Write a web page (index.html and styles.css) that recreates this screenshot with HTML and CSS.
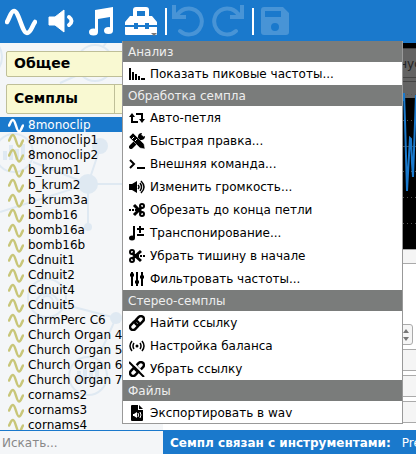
FILE: index.html
```html
<!DOCTYPE html>
<html lang="ru">
<head>
<meta charset="utf-8">
<title>Семплы</title>
<link rel="stylesheet" href="styles.css">
</head>
<body>
<svg class="defs" aria-hidden="true">
  <symbol id="wave" viewBox="0 0 32 32"><path d="M2 17C5 12 6 6 10 6C15 6 17 29 22 29C26 29 27 21 30 17" fill="none" stroke="currentColor" stroke-width="5" stroke-linecap="round"/></symbol>
</svg>

<header class="toolbar">
  <button class="tool" aria-label="Семпл"><svg viewBox="0 0 32 32"><path d="M2 17C5 12 6 6 9 6C14 6 17 28 22 28C26 28 27 21 30 17" fill="none" stroke="currentColor" stroke-width="4.500" stroke-linecap="round"/></svg></button>
  <button class="tool" aria-label="Звук"><svg viewBox="0 0 32 32"><path d="M4 12h6l9-7v22l-9-7H4z" fill="currentColor" stroke="currentColor" stroke-linejoin="round"/><path d="M24 12q5 4 0 8" fill="none" stroke="currentColor" stroke-width="4" stroke-linecap="round"/></svg></button>
  <button class="tool" aria-label="Ноты"><svg viewBox="0 0 32 32"><path d="M10 5L28 2V25H25V12L13 14V27H10Z" fill="currentColor"/><ellipse cx="8.500" cy="27" rx="4.500" ry="3.500" fill="currentColor"/><ellipse cx="23.500" cy="25.500" rx="4.500" ry="3.500" fill="currentColor"/></svg></button>
  <button class="tool" aria-label="Инструменты" aria-expanded="true"><svg viewBox="0 0 32 32"><path d="M8 11V5Q8 2 11 2H21Q24 2 24 5V11H27L32 17V20H24V18H20V20H13V18H9V20H0V17L5 11ZM12 11H20V6H12Z" fill="currentColor" fill-rule="evenodd"/><path d="M0 22H9V24H13V22H20V24H24V22H32V29Q32 30 31 30H1Q0 30 0 29Z" fill="currentColor"/><path d="M26 28h6l-3 3z" fill="#777"/></svg></button>
  <span class="separator"></span>
  <button class="tool" aria-label="Отменить" disabled><svg viewBox="0 0 32 32"><path d="M5 11A13 13 0 1 1 8 26" fill="none" stroke="currentColor" stroke-width="4" stroke-linecap="round"/><path d="M0 0H4V7L7 10H14V14H0Z" fill="currentColor"/></svg></button>
  <button class="tool" aria-label="Вернуть" disabled><svg viewBox="0 0 32 32"><path d="M27 11A13 13 0 1 0 24 26" fill="none" stroke="currentColor" stroke-width="4" stroke-linecap="round"/><path d="M32 0H28V7L25 10H18V14H32Z" fill="currentColor"/></svg></button>
  <span class="separator"></span>
  <button class="tool" aria-label="Сохранить" disabled><svg viewBox="0 0 32 32"><path d="M5 2H24L30 8V27Q30 30 27 30H5Q2 30 2 27V5Q2 2 5 2ZM6 6V12H22V6ZM16 18A4 4 0 1 0 16 26A4 4 0 1 0 16 18Z" fill="currentColor" fill-rule="evenodd"/></svg></button>
</header>

<main class="workspace">
  <aside class="sidebar">
    <svg class="backdrop" viewBox="0 0 163 387" preserveAspectRatio="xMinYMin slice" aria-hidden="true">
      <g fill="none" stroke="currentColor" stroke-width="2">
        <circle cx="-18" cy="14" r="20"/><circle cx="95" cy="20" r="18"/><path d="M103 4L110-6M80 31L60 40"/>
        <circle cx="14" cy="110" r="19"/><path d="M33 119L88 141L0 169M88 141L100 105M88 141H163M88 141V184"/>
        <circle cx="47" cy="255" r="19"/><path d="M66 262L116 275L102 306"/>
        <circle cx="88" cy="333" r="19"/><path d="M36 258a12 12 0 0 1 22 0M41 259a6 6 0 0 1 12 0"/>
        <path d="M5 117V108M11 117V102M17 117V106M23 117V101M79 341V328M85 341V325M91 341V327M97 341V325" stroke-width="4"/>
      </g>
      <g fill="currentColor"><circle cx="100" cy="103" r="8"/><circle cx="88" cy="141" r="10"/><circle cx="88" cy="184" r="4"/><circle cx="116" cy="275" r="6"/></g>
    </svg>
    <h2 class="group">Общее</h2>
    <h2 class="group group-tall"><span>Семплы</span><span class="group-extra"></span></h2>
    <ul class="samples">
      <li class="selected"><svg><use href="#wave"/></svg>8monoclip</li>
      <li><svg><use href="#wave"/></svg>8monoclip1</li>
      <li><svg><use href="#wave"/></svg>8monoclip2</li>
      <li><svg><use href="#wave"/></svg>b_krum1</li>
      <li><svg><use href="#wave"/></svg>b_krum2</li>
      <li><svg><use href="#wave"/></svg>b_krum3a</li>
      <li><svg><use href="#wave"/></svg>bomb16</li>
      <li><svg><use href="#wave"/></svg>bomb16a</li>
      <li><svg><use href="#wave"/></svg>bomb16b</li>
      <li><svg><use href="#wave"/></svg>Cdnuit1</li>
      <li><svg><use href="#wave"/></svg>Cdnuit2</li>
      <li><svg><use href="#wave"/></svg>Cdnuit4</li>
      <li><svg><use href="#wave"/></svg>Cdnuit5</li>
      <li><svg><use href="#wave"/></svg>ChrmPerc C6</li>
      <li><svg><use href="#wave"/></svg>Church Organ 4</li>
      <li><svg><use href="#wave"/></svg>Church Organ 5</li>
      <li><svg><use href="#wave"/></svg>Church Organ 6</li>
      <li><svg><use href="#wave"/></svg>Church Organ 7</li>
      <li><svg><use href="#wave"/></svg>cornams2</li>
      <li><svg><use href="#wave"/></svg>cornams3</li>
      <li><svg><use href="#wave"/></svg>cornams4</li>
    </ul>
  </aside>

  <section class="editor">
    <div class="graph">
      <div class="graph-bar"><button class="graph-button">Синус</button></div>
      <svg class="plot" viewBox="0 0 13 206" preserveAspectRatio="none" aria-hidden="true">
        <path d="M0 51.500H13M0 77.500H13M0 128.500H13M0 154.500H13M0 180.500H13" stroke="#555" stroke-dasharray="1 3"/>
        <path d="M0 103.500H13" stroke="#444"/>
        <path d="M0 58L1 50L2 78L4 148L5 130L7 95L8 96L9 120L10 134L12 80L13 52" fill="none" stroke="#1a79cc" stroke-width="2"/>
      </svg>
    </div>
    <div class="ruler"></div>
    <div class="fields">
      <div class="spin"><svg viewBox="0 0 10 20" aria-hidden="true"><path d="M0 8L3 4L6 8ZM0 12L3 16L6 12Z" fill="#777"/></svg></div>
      <div class="field"></div>
      <div class="field"></div>
      <div class="field"></div>
    </div>
  </section>
</main>

<footer class="bottom">
  <input class="search" type="search" placeholder="Искать..." aria-label="Искать">
  <p class="status"><strong>Семпл связан с инструментами:</strong><span>Preset</span></p>
</footer>

<nav class="menu" aria-label="Инструменты">
  <h3>Анализ</h3>
  <button><svg viewBox="0 0 16 16"><path d="M1 2V14M4 6V14M7 8V14M10 10V14M13 12V14M15 12V14" stroke="currentColor" stroke-width="2"/></svg>Показать пиковые частоты...</button>
  <h3>Обработка семпла</h3>
  <button><svg viewBox="0 0 16 16"><path d="M3 6V12H9M7 4H13V10" fill="none" stroke="currentColor" stroke-width="2"/><path d="M0 7L3 3L6 7ZM10 9H16L13 13Z" fill="currentColor"/></svg>Авто-петля</button>
  <button><svg viewBox="0 0 16 16"><path d="M2 14L12 4" stroke="currentColor" stroke-width="4" stroke-linecap="round"/><path d="M9 4Q9 0 13 0L12 3L13 4L16 3Q16 7 12 7Z" fill="currentColor"/><path d="M0 4L4 0L15 11L16 16L11 15Z" fill="currentColor" stroke="#fff" stroke-width=".5"/><path d="M3 6L5 4M6 8L8 6" stroke="#fff"/></svg>Быстрая правка...</button>
  <button><svg viewBox="0 0 16 16"><path d="M1 4L5 8L1 12M8 12H16" fill="none" stroke="currentColor" stroke-width="2"/></svg>Внешняя команда...</button>
  <button><svg viewBox="0 0 16 16"><path d="M0 5H3L8 2V14L3 11H0Z" fill="currentColor"/><path d="M9 6Q11 8 9 10M11 4Q14 8 11 12M12 2Q18 8 12 14" fill="none" stroke="currentColor" stroke-width="1.500"/></svg>Изменить громкость...</button>
  <button><svg viewBox="0 0 16 16"><path d="M5 3L13 11M5 13L13 5" stroke="currentColor" stroke-width="3"/><path d="M0 8H8" stroke="currentColor" stroke-width="2" stroke-dasharray="2 1"/><g fill="none" stroke="currentColor" stroke-width="2"><circle cx="13" cy="4" r="2"/><circle cx="13" cy="12" r="2"/></g></svg>Обрезать до конца петли</button>
  <button><svg viewBox="0 0 16 16"><path d="M5 1V13M11 1V8M8 4H15M8 10H15" stroke="currentColor" stroke-width="2"/><ellipse cx="3" cy="13" rx="3" ry="2.500" fill="currentColor"/></svg>Транспонирование...</button>
  <button><svg viewBox="0 0 16 16"><path d="M12 3L3 11M12 13L3 5" stroke="currentColor" stroke-width="3"/><path d="M16 8H8" stroke="currentColor" stroke-width="2" stroke-dasharray="2 1"/><g fill="none" stroke="currentColor" stroke-width="2"><circle cx="3" cy="4" r="2"/><circle cx="3" cy="12" r="2"/></g></svg>Убрать тишину в начале</button>
  <button><svg viewBox="0 0 16 16"><path d="M3 1V15M8 1V15M13 1V15" stroke="currentColor" stroke-width="2"/><path d="M1 4H5M6 11H10M11 6H15" stroke="currentColor" stroke-width="3"/></svg>Фильтровать частоты...</button>
  <h3>Стерео-семплы</h3>
  <button><svg viewBox="0 0 16 16"><g fill="none" stroke="currentColor" stroke-width="2.500"><rect x="5.500" y="2.500" width="10" height="6" rx="3" transform="rotate(-45 10.500 5.500)"/><rect x=".5" y="7.500" width="10" height="6" rx="3" transform="rotate(-45 5.500 10.500)"/></g></svg>Найти ссылку</button>
  <button><svg viewBox="0 0 16 16"><circle cx="8" cy="8" r="1.500" fill="currentColor"/><path d="M5 5Q3 8 5 11M11 5Q13 8 11 11M3 3Q-1 8 3 13M13 3Q17 8 13 13" fill="none" stroke="currentColor" stroke-width="1.500"/></svg>Настройка баланса</button>
  <button><svg viewBox="0 0 16 16"><g fill="none" stroke="currentColor" stroke-width="2.500"><rect x="5.500" y="2.500" width="10" height="6" rx="3" transform="rotate(-45 10.500 5.500)"/><rect x=".5" y="7.500" width="10" height="6" rx="3" transform="rotate(-45 5.500 10.500)"/></g><path d="M2 0L16 14" stroke="#fff" stroke-width="2"/><path d="M0 1L15 16" stroke="currentColor" stroke-width="2"/></svg>Убрать ссылку</button>
  <h3>Файлы</h3>
  <button><svg viewBox="0 0 16 16"><path d="M2 1Q2 0 3 0H9V5H14V15Q14 16 13 16H3Q2 16 2 15ZM10 0L14 4H10Z" fill="currentColor"/><path d="M4 9H5L8 7V13L5 11H4Z" fill="#fff"/><path d="M9 8Q10 10 9 12M11 7Q13 10 11 13" fill="none" stroke="#fff"/></svg>Экспортировать в wav</button>
</nav>
</body>
</html>
```
FILE: styles.css
```css
* { box-sizing: border-box; }

body {
  position: relative;
  display: flex;
  flex-direction: column;
  height: 100vh;
  margin: 0;
  overflow: hidden;
  font: 12px/16px "DejaVu Sans", sans-serif;
  color: #000;
  background: #fff;
}

h2, h3, p, ul { margin: 0; padding: 0; }
button { font: inherit; color: inherit; }
.defs { position: absolute; width: 0; height: 0; }

.toolbar {
  display: flex;
  align-items: center;
  flex: none;
  padding: 5px 5px 6px;
  color: #fff;
  background: #1a79cc;
}
.tool {
  width: 32px;
  height: 32px;
  margin-right: 8px;
  padding: 0;
  border: 0;
  background: none;
}
.tool:disabled { color: #4894d6; }
.tool svg { display: block; width: 32px; height: 32px; }
.separator {
  width: 2px;
  height: 27px;
  margin-right: 5px;
  background: #fff;
}

.workspace { display: flex; flex: 1; min-height: 0; }

.sidebar {
  position: relative;
  display: flex;
  flex-direction: column;
  flex: none;
  width: 163px;
  padding-top: 8px;
  background: #f4f6f8;
}
.backdrop {
  position: absolute;
  inset: 0;
  width: 100%;
  height: 100%;
  color: #dfe9f2;
}
.group {
  position: relative;
  display: flex;
  align-items: center;
  justify-content: space-between;
  flex: none;
  height: 26px;
  margin: 0 6px 7px;
  padding: 0 0 2px 7px;
  border: 1px solid #bfbf98;
  border-radius: 2px;
  font-size: 14px;
  background: #f9f9d2;
}
.group-tall { height: 30px; margin-bottom: 3px; }
.group-extra { align-self: stretch; width: 42px; margin-bottom: -2px; border-left: 1px solid #bfbf98; }

.samples {
  position: relative;
  flex: 1;
  min-height: 0;
  overflow: hidden;
  list-style: none;
}
.samples li {
  display: flex;
  align-items: center;
  gap: 4px;
  height: 15px;
  padding: 1px 0 0 8px;
}
.samples svg { width: 16px; height: 16px; color: #c8c678; }
.samples .selected { color: #fff; background: #1a79cc; }
.samples .selected svg { color: #fff; }

.editor { display: flex; flex-direction: column; flex: 1; min-width: 0; }
.graph {
  position: relative;
  flex: none;
  height: 206px;
  padding-top: 5px;
  background: #000;
}
.graph-bar { height: 50px; border-top: 1px solid #444; background: #636363; }
.graph-button {
  display: block;
  width: 100%;
  height: 29px;
  margin-bottom: 3px;
  padding: 2px 0 0 220px;
  border: 0;
  border-bottom: 1px solid #444;
  text-align: left;
  color: #222;
  background: none;
}
.graph-bar::after { content: ""; display: block; border-top: 1px solid #444; }
.plot { position: absolute; right: 0; top: 0; width: 13px; height: 206px; }
.ruler {
  flex: none;
  height: 15px;
  border: solid #aaa;
  border-width: 1px 0;
  background: #f5f5f5;
}
.fields {
  display: flex;
  flex-direction: column;
  gap: 4px;
  flex: 1;
  padding-top: 60px;
}
.spin {
  width: 20px;
  height: 21px;
  margin-right: 3px;
  align-self: flex-end;
  padding-left: 9px;
  border: 1px solid #aaa;
  border-radius: 3px;
  background: #f5f5f5;
}
.spin svg { display: block; width: 10px; height: 20px; }
.field { height: 22px; border: solid #aaa; border-width: 1px 0; background: #f5f5f5; }

.bottom { display: flex; flex: none; height: 24px; }
.search {
  flex: none;
  width: 163px;
  padding: 0 2px;
  border: 0;
  border-top: 1px solid #1a79cc;
  font: inherit;
  color: #000;
  background: #f4f6f8;
}
.search::placeholder { color: #888; opacity: 1; }
.status {
  display: flex;
  align-items: center;
  gap: 11px;
  flex: 1;
  min-width: 0;
  padding: 2px 0 0 7px;
  overflow: hidden;
  white-space: nowrap;
  color: #fff;
  background: #1a79cc;
}

.menu {
  position: absolute;
  left: 122px;
  top: 41px;
  width: 281px;
  border: solid #999;
  border-width: 0 1px 1px;
  background: #fff;
}
.menu h3 {
  height: 21px;
  padding: 3px 5px;
  font-weight: normal;
  font-size: 12px;
  color: #eee;
  background: #7a7c7b;
}
.menu button {
  display: flex;
  align-items: center;
  gap: 5px;
  width: 100%;
  height: 23px;
  padding: 1px 6px 0;
  border: 0;
  text-align: left;
  white-space: nowrap;
  background: #fff;
}
.menu button:last-child { height: 22px; }
.menu svg { flex: none; width: 16px; height: 16px; }
```
